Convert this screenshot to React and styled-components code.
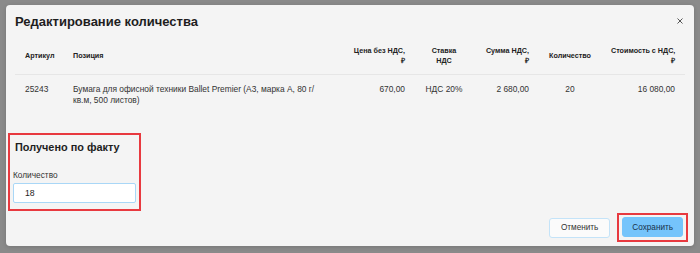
import React from 'react';
import styled, { createGlobalStyle } from 'styled-components';

const GlobalStyle = createGlobalStyle`
  html, body {
    margin: 0;
    padding: 0;
    background: #8a8a8a;
    font-family: "Liberation Sans", Arial, sans-serif;
  }
  * {
    box-sizing: border-box;
  }
`;

const Page = styled.div`
  width: 700px;
  height: 253px;
  padding: 5px 6px 7px 6px;
  background: #8a8a8a;
  overflow: hidden;
`;

const Modal = styled.div`
  height: 241px;
  background: #f4f4f4;
  border-radius: 4px;
  display: flex;
  flex-direction: column;
  box-shadow: 0 1px 4px rgba(0, 0, 0, 0.15);
`;

const Header = styled.div`
  display: flex;
  justify-content: space-between;
  align-items: center;
  padding: 8px 10px 0 9px;
  height: 25px;
`;

const Title = styled.div`
  font-size: 13px;
  font-weight: 700;
  color: #1e1e1e;
  line-height: 16px;
`;

const Close = styled.button`
  border: none;
  background: none;
  padding: 0;
  width: 8px;
  height: 8px;
  margin-top: -2px;
  display: flex;
  align-items: center;
  justify-content: center;
  cursor: pointer;
`;

const TableWrap = styled.div`
  padding: 8px 9px 0 9px;
`;

const Table = styled.table`
  width: 670px;
  border-collapse: collapse;
  table-layout: fixed;
`;

const Th = styled.th`
  width: ${(p) => p.$w}px;
  height: 36px;
  padding: 0 10px;
  font-size: 7.2px;
  line-height: 10px;
  font-weight: 700;
  color: #222;
  text-align: ${(p) => p.$align || 'left'};
  vertical-align: middle;
  border-bottom: 1px solid #e6e6e6;
  white-space: nowrap;
`;

const Td = styled.td`
  padding: 9px 10px 10px 10px;
  font-size: 8.4px;
  line-height: 11px;
  color: #333;
  text-align: ${(p) => p.$align || 'left'};
  vertical-align: top;
  white-space: ${(p) => (p.$wrap ? 'normal' : 'nowrap')};
`;

const Highlight = styled.div`
  border: 2px solid #e8393f;
  padding: ${(p) => p.$pad};
`;

const Received = styled(Highlight)`
  margin: 17px 0 0 2px;
  width: 133px;
  height: 78px;
`;

const SectionTitle = styled.div`
  font-size: 10.9px;
  font-weight: 700;
  color: #1e1e1e;
  line-height: 14px;
  margin: 1px 0 0 2px;
  white-space: nowrap;
`;

const Label = styled.div`
  margin-top: 16px;
  font-size: 8.3px;
  line-height: 10px;
  color: #333;
`;

const Input = styled.input`
  display: block;
  margin-top: 3px;
  width: 123px;
  height: 20px;
  padding: 0 11px;
  border: 1px solid #a9d7f7;
  border-radius: 2px;
  background: #fff;
  font-family: inherit;
  font-size: 8.7px;
  color: #222;
  outline: none;
`;

const Footer = styled.div`
  margin-top: auto;
  display: flex;
  justify-content: flex-end;
  align-items: center;
  gap: 7px;
  padding: 0 6px 4px 0;
`;

const Button = styled.button`
  display: block;
  height: 20px;
  padding: 0 ${(p) => (p.$primary ? 9 : 11)}px;
  border-radius: 3px;
  border: 1px solid ${(p) => (p.$primary ? '#75c4fb' : '#c4e3f8')};
  background: ${(p) => (p.$primary ? '#75c4fb' : '#fbfbfb')};
  color: ${(p) => (p.$primary ? '#17324b' : '#333')};
  font-family: inherit;
  font-size: 8.2px;
  cursor: pointer;
`;

const columns = [
  { key: 'sku', title: 'Артикул', w: 48 },
  { key: 'name', title: 'Позиция', w: 276, wrap: true },
  { key: 'price', title: ['Цена без НДС,', '₽'], w: 76, align: 'right' },
  { key: 'rate', title: ['Ставка', 'НДС'], w: 58, align: 'center' },
  { key: 'vat', title: ['Сумма НДС,', '₽'], w: 66, align: 'right' },
  { key: 'qty', title: 'Количество', w: 62, align: 'center' },
  { key: 'total', title: ['Стоимость с НДС,', '₽'], w: 84, align: 'right' },
];

const row = {
  sku: '25243',
  name: 'Бумага для офисной техники Ballet Premier (А3, марка А, 80 г/кв.м, 500 листов)',
  price: '670,00',
  rate: 'НДС 20%',
  vat: '2 680,00',
  qty: '20',
  total: '16 080,00',
};

export default function App() {
  return (
    <>
      <GlobalStyle />
      <Page>
        <Modal>
          <Header>
            <Title>Редактирование количества</Title>
            <Close aria-label="Закрыть">
              <svg width="6" height="6" viewBox="0 0 6 6">
                <path d="M0.5 0.5 L5.5 5.5 M5.5 0.5 L0.5 5.5" stroke="#555" strokeWidth="1" />
              </svg>
            </Close>
          </Header>
          <TableWrap>
            <Table>
              <thead>
                <tr>
                  {columns.map((c) => (
                    <Th key={c.key} $w={c.w} $align={c.align}>
                      {Array.isArray(c.title) ? (
                        <>
                          {c.title[0]}
                          <br />
                          {c.title[1]}
                        </>
                      ) : (
                        c.title
                      )}
                    </Th>
                  ))}
                </tr>
              </thead>
              <tbody>
                <tr>
                  {columns.map((c) => (
                    <Td key={c.key} $align={c.align} $wrap={c.wrap}>
                      {row[c.key]}
                    </Td>
                  ))}
                </tr>
              </tbody>
            </Table>
          </TableWrap>
          <Received $pad="4px 3px 6px 3px">
            <SectionTitle>Получено по факту</SectionTitle>
            <Label>Количество</Label>
            <Input defaultValue="18" />
          </Received>
          <Footer>
            <Button>Отменить</Button>
            <Highlight $pad="2px 3px 3px 3px">
              <Button $primary>Сохранить</Button>
            </Highlight>
          </Footer>
        </Modal>
      </Page>
    </>
  );
}
